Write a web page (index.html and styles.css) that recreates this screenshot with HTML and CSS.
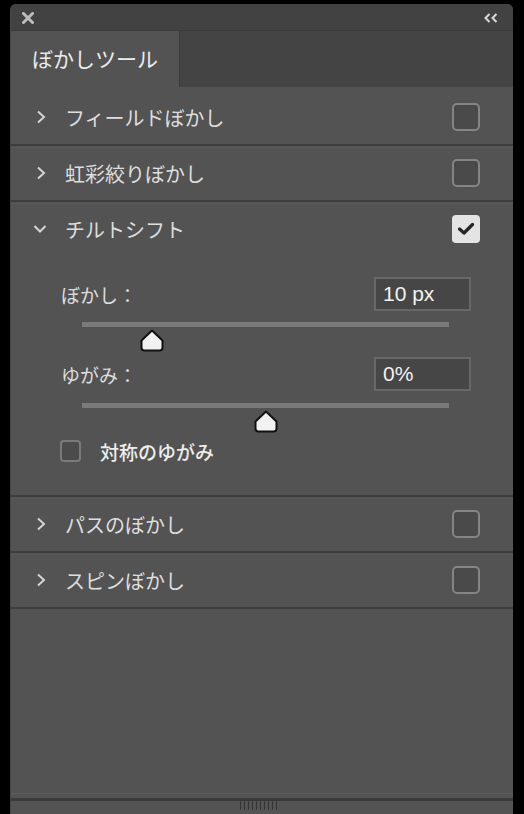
FILE: index.html
```html
<!DOCTYPE html>
<html lang="ja">
<head>
<meta charset="utf-8">
<title>ぼかしツール</title>
<link rel="stylesheet" href="styles.css">
</head>
<body>
<div class="frame">
  <div class="panel">
    <div class="titlebar">
      <svg class="close" width="12" height="12" viewBox="0 0 12 12"><path d="M1.5 1.5 L10.5 10.5 M10.5 1.5 L1.5 10.5" stroke="#bdbdbd" stroke-width="3" stroke-linecap="round"/></svg>
      <svg class="collapse" width="14" height="10" viewBox="0 0 14 10"><path d="M5.5 1 L1.5 5 L5.5 9 M12.5 1 L8.5 5 L12.5 9" fill="none" stroke="#d8d8d8" stroke-width="2"/></svg>
    </div>
    <div class="tabs">
      <div class="tab">ぼかしツール</div>
      <div class="tab-rest"></div>
    </div>
    <div class="content">
      <section class="sec">
        <div class="row">
          <svg class="chev" width="10" height="14" viewBox="0 0 10 14"><path d="M2 1.5 L8 7 L2 12.5" fill="none" stroke="#d4d4d4" stroke-width="2"/></svg>
          <span class="label">フィールドぼかし</span>
          <span class="cb"></span>
        </div>
      </section>
      <section class="sec">
        <div class="row">
          <svg class="chev" width="10" height="14" viewBox="0 0 10 14"><path d="M2 1.5 L8 7 L2 12.5" fill="none" stroke="#d4d4d4" stroke-width="2"/></svg>
          <span class="label">虹彩絞りぼかし</span>
          <span class="cb"></span>
        </div>
      </section>
      <section class="sec">
        <div class="row">
          <svg class="chev down" width="14" height="10" viewBox="0 0 14 10"><path d="M1.5 2 L7 7.5 L12.5 2" fill="none" stroke="#d4d4d4" stroke-width="2"/></svg>
          <span class="label">チルトシフト</span>
          <span class="cb checked"><svg width="18" height="14" viewBox="0 0 18 14"><path d="M2.5 7 L7 11 L15.5 2.5" fill="none" stroke="#262626" stroke-width="3.2" stroke-linecap="round" stroke-linejoin="round"/></svg></span>
        </div>
        <div class="body">
          <div class="field first">
            <span class="flabel">ぼかし：</span>
            <div class="input">10 px</div>
          </div>
          <div class="slider">
            <div class="track"></div>
            <svg class="thumb" style="left: 19%" width="24" height="23" viewBox="0 0 24 23"><path d="M12 1.5 L22.5 11.5 L22.5 18.5 Q22.5 21.5 19.5 21.5 L4.5 21.5 Q1.5 21.5 1.5 18.5 L1.5 11.5 Z" fill="#f2f2f2" stroke="#111" stroke-width="2" stroke-linejoin="round"/></svg>
          </div>
          <div class="field second">
            <span class="flabel">ゆがみ：</span>
            <div class="input">0%</div>
          </div>
          <div class="slider second">
            <div class="track"></div>
            <svg class="thumb" style="left: 50%" width="24" height="23" viewBox="0 0 24 23"><path d="M12 1.5 L22.5 11.5 L22.5 18.5 Q22.5 21.5 19.5 21.5 L4.5 21.5 Q1.5 21.5 1.5 18.5 L1.5 11.5 Z" fill="#f2f2f2" stroke="#111" stroke-width="2" stroke-linejoin="round"/></svg>
          </div>
          <div class="check">
            <span class="cb small"></span>
            <span class="clabel">対称のゆがみ</span>
          </div>
        </div>
      </section>
      <section class="sec">
        <div class="row">
          <svg class="chev" width="10" height="14" viewBox="0 0 10 14"><path d="M2 1.5 L8 7 L2 12.5" fill="none" stroke="#d4d4d4" stroke-width="2"/></svg>
          <span class="label">パスのぼかし</span>
          <span class="cb"></span>
        </div>
      </section>
      <section class="sec">
        <div class="row">
          <svg class="chev" width="10" height="14" viewBox="0 0 10 14"><path d="M2 1.5 L8 7 L2 12.5" fill="none" stroke="#d4d4d4" stroke-width="2"/></svg>
          <span class="label">スピンぼかし</span>
          <span class="cb"></span>
        </div>
      </section>
      <div class="fill"></div>
      <div class="footer">
        <div class="bar"><div class="grip"></div></div>
      </div>
    </div>
  </div>
</div>
</body>
</html>
```
FILE: styles.css
```css
* { box-sizing: border-box; }
html, body { margin: 0; padding: 0; background: #000; }
body {
  font-family: "Noto Sans CJK JP", "Noto Sans", sans-serif;
  color: #dedede;
}
.frame {
  padding: 4px 11px 0 10px;
  height: 814px;
}
.panel {
  height: 810px;
  display: flex;
  flex-direction: column;
  background: #535353;
  border-radius: 6px 6px 0 0;
  overflow: hidden;
  border-left: 1px solid #484848;
}
.titlebar {
  height: 27px;
  flex: none;
  background: #424242;
  display: flex;
  align-items: center;
  justify-content: space-between;
  padding: 1px 15px 0 11px;
  border-bottom: 1px solid #3a3a3a;
}
.tabs {
  height: 56px;
  flex: none;
  display: flex;
  background: #444;
}
.tab {
  width: 169px;
  background: #535353;
  border-right: 1px solid #3c3c3c;
  padding-left: 21px;
  font-size: 21px;
  line-height: 54px;
  color: #ececec;
}
.tab-rest { flex: 1; }
.content {
  flex: 1;
  display: flex;
  flex-direction: column;
  padding-top: 3px;
}
.sec {
  border-bottom: 2px solid #3d3d3d;
  background-image: linear-gradient(to bottom, transparent 0, transparent 1px, #595959 1px, #595959 2px, transparent 2px);
}
.sec:first-child { background-image: none; }
.row {
  height: 54px;
  display: flex;
  align-items: center;
  padding: 0 33px 0 25px;
}
.chev { flex: none; margin-right: 19px; }
.chev.down { margin-left: -3px; margin-right: 18px; }
.label {
  flex: 1;
  font-size: 20px;
  color: #dedede;
  padding-top: 1px;
}
.cb {
  width: 28px;
  height: 28px;
  border: 2px solid #858585;
  border-radius: 5px;
  background: #4a4a4a;
  flex: none;
}
.cb.checked {
  background: #e4e4e4;
  border: none;
  border-radius: 4px;
  display: flex;
  align-items: center;
  justify-content: center;
}
.body {
  padding: 0 42px 33px 50px;
  display: flex;
  flex-direction: column;
}
.field {
  display: flex;
  justify-content: space-between;
  align-items: center;
  height: 34px;
}
.field.first { margin-top: 21px; }
.field.second { margin-top: 6px; }
.flabel { font-size: 19px; color: #dcdcdc; }
.input {
  width: 97px;
  height: 34px;
  background: #464646;
  border: 2px solid #686868;
  padding-left: 7px;
  font-family: "Liberation Sans", "Noto Sans", sans-serif;
  font-size: 21px;
  line-height: 30px;
  color: #f2f2f2;
}
.slider {
  position: relative;
  height: 29px;
  margin: 11px 22px 0 21px;
}
.slider.second { margin-top: 12px; }
.track {
  height: 5px;
  background: #7a7a7a;
}
.thumb {
  position: absolute;
  top: 7px;
  transform: translateX(-50%);
}
.check {
  margin-top: 8px;
  display: flex;
  align-items: center;
  height: 22px;
}
.cb.small {
  width: 21px;
  height: 22px;
  border: 2px solid #7a7a7a;
  border-radius: 4px;
  background: #4b4b4b;
  margin-left: -1px;
  margin-right: 19px;
}
.clabel { font-size: 19px; font-weight: 500; color: #ececec; }
.fill { flex: 1; }
.footer {
  height: 21px;
  flex: none;
  border-top: 1px solid #5e5e5e;
  padding-top: 4px;
}
.bar {
  height: 16px;
  border-top: 3px solid #3a3a3a;
  position: relative;
}
.grip {
  position: absolute;
  left: 229px;
  top: -1px;
  width: 39px;
  height: 10px;
  background: repeating-linear-gradient(to right, #363636 0, #363636 1px, transparent 1px, transparent 4px);
}
```
